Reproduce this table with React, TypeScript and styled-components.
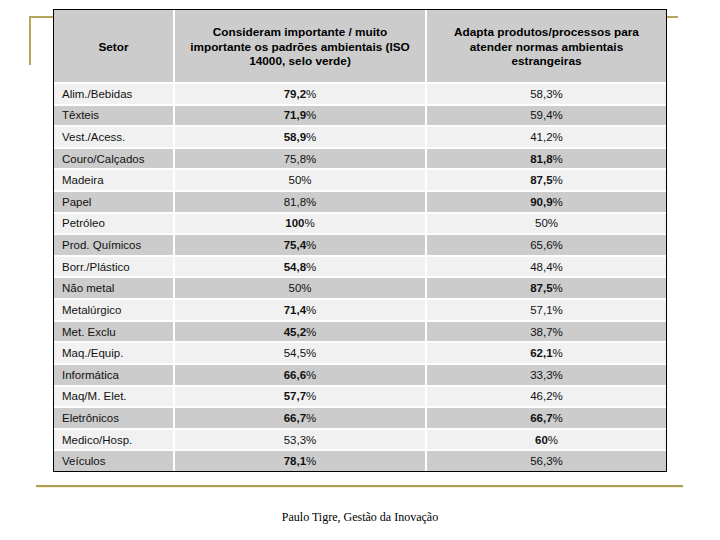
import React from "react";
import styled, { createGlobalStyle } from "styled-components";

const Global = createGlobalStyle`
  html, body { margin: 0; padding: 0; background: #fff; }
  * { box-sizing: border-box; }
`;

const Page = styled.div`
  position: relative;
  width: 720px;
  height: 540px;
  overflow: hidden;
  padding-top: 9px;
  font-family: "Liberation Sans", Arial, sans-serif;
`;

const Corner = styled.div`
  position: absolute;
  left: 29px;
  top: 16px;
  width: 649px;
  height: 49px;
  border-top: 2px solid #b5a65c;
  border-left: 2px solid #b5a65c;
`;

const Table = styled.div`
  position: relative;
  margin-left: 53px;
  width: 614px;
  height: 463px;
  border: 1px solid #000;
  background: #fff;
  display: grid;
  grid-template-columns: 119px 250px 239px;
  grid-template-rows: 72px repeat(18, 1fr);
  gap: 2px;
`;

const HeadCell = styled.div`
  background: #cccccc;
  display: flex;
  align-items: center;
  justify-content: center;
  text-align: center;
  font-weight: bold;
  font-size: 11.8px;
  line-height: 14.5px;
  color: #000;
  padding-top: 2px;
`;

const Cell = styled.div<{ $shade: boolean; $align?: "left" | "center" }>`
  background: ${(p) => (p.$shade ? "#cccccc" : "#f1f1f1")};
  display: flex;
  align-items: center;
  justify-content: ${(p) => (p.$align === "left" ? "flex-start" : "center")};
  padding-left: ${(p) => (p.$align === "left" ? "8px" : "0")};
  font-size: 11.5px;
  color: #111;
  white-space: nowrap;
`;

const Num = styled.span<{ $bold: boolean }>`
  font-weight: ${(p) => (p.$bold ? "bold" : "normal")};
`;

const Rule = styled.div`
  margin-top: 13px;
  margin-left: 36px;
  width: 647px;
  height: 2px;
  background: #ab9d58;
  box-shadow: 0 1px 1px #f6efc8;
`;

const Footer = styled.div`
  margin-top: 23px;
  text-align: center;
  font-family: "Liberation Serif", "Times New Roman", serif;
  font-size: 12px;
  line-height: 14px;
  color: #000;
`;

type Row = [string, string, boolean, string, boolean];

const rows: Row[] = [
  ["Alim./Bebidas", "79,2", true, "58,3", false],
  ["Têxteis", "71,9", true, "59,4", false],
  ["Vest./Acess.", "58,9", true, "41,2", false],
  ["Couro/Calçados", "75,8", false, "81,8", true],
  ["Madeira", "50", false, "87,5", true],
  ["Papel", "81,8", false, "90,9", true],
  ["Petróleo", "100", true, "50", false],
  ["Prod. Químicos", "75,4", true, "65,6", false],
  ["Borr./Plástico", "54,8", true, "48,4", false],
  ["Não metal", "50", false, "87,5", true],
  ["Metalúrgico", "71,4", true, "57,1", false],
  ["Met. Exclu", "45,2", true, "38,7", false],
  ["Maq./Equip.", "54,5", false, "62,1", true],
  ["Informática", "66,6", true, "33,3", false],
  ["Maq/M. Elet.", "57,7", true, "46,2", false],
  ["Eletrônicos", "66,7", true, "66,7", true],
  ["Medico/Hosp.", "53,3", false, "60", true],
  ["Veículos", "78,1", true, "56,3", false],
];

const Value: React.FC<{ v: string; bold: boolean }> = ({ v, bold }) => (
  <span>
    <Num $bold={bold}>{v}</Num>%
  </span>
);

export default function App() {
  return (
    <Page>
      <Global />
      <Corner />
      <Table>
        <HeadCell>Setor</HeadCell>
        <HeadCell>
          Consideram importante / muito
          <br />
          importante os padrões ambientais (ISO
          <br />
          14000, selo verde)
        </HeadCell>
        <HeadCell>
          Adapta produtos/processos para
          <br />
          atender normas ambientais
          <br />
          estrangeiras
        </HeadCell>
        {rows.map(([name, a, ab, b, bb], i) => {
          const shade = i % 2 === 1;
          return (
            <React.Fragment key={name}>
              <Cell $shade={shade} $align="left">{name}</Cell>
              <Cell $shade={shade}>
                <Value v={a} bold={ab} />
              </Cell>
              <Cell $shade={shade}>
                <Value v={b} bold={bb} />
              </Cell>
            </React.Fragment>
          );
        })}
      </Table>
      <Rule />
      <Footer>Paulo Tigre, Gestão da Inovação</Footer>
    </Page>
  );
}
